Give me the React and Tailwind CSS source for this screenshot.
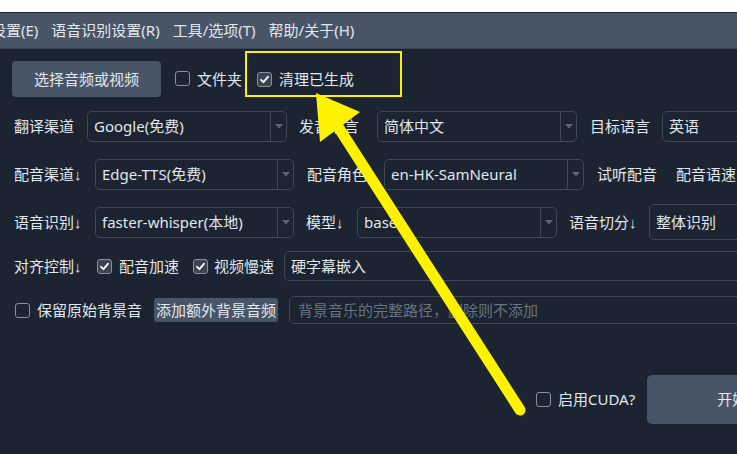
import React from "react";

const font = { fontFamily: '"Noto Sans", "Noto Sans CJK SC", sans-serif' };
const arrowFont = { fontFamily: '"Liberation Sans", "DejaVu Sans", sans-serif' };

function Arr() {
  return <span style={arrowFont}>↓</span>;
}

function Check({ checked }) {
  return (
    <span className={`inline-flex items-center justify-center w-[15px] h-[15px] rounded-[3px] border-[1.5px] border-[#8a9099] shrink-0 ${checked ? "bg-[#3a4452]" : "bg-[#1b2430]"}`}>
      {checked && (
        <svg width="11" height="11" viewBox="0 0 11 11">
          <path d="M2 5.8 L4.4 8.2 L9 2.8" fill="none" stroke="#ffffff" strokeWidth="1.8" strokeLinecap="round" strokeLinejoin="round" />
        </svg>
      )}
    </span>
  );
}

function Combo({ text, w, h = "h-[31px]", arrow = true }) {
  return (
    <div className={`flex ${h} ${w} shrink-0 items-stretch rounded-[5px] border border-[#3d4858]`}>
      <div className="flex-1 flex items-center pl-[6px] whitespace-nowrap overflow-hidden">{text}</div>
      {arrow && (
        <div className="w-[16px] border-l border-[#3d4858] flex items-center justify-center">
          <svg width="8" height="5" viewBox="0 0 8 5"><path d="M0 0 H8 L4 4.5 Z" fill="#5c6674" /></svg>
        </div>
      )}
    </div>
  );
}

export default function App() {
  return (
    <div className="relative w-[737px] h-[454px] overflow-hidden bg-[#1b2430] text-[15px] text-[#e1e7ee] leading-none" style={font}>
      <div className="h-[12px] bg-white"></div>
      <div className="h-[1px] bg-[#1f2630]"></div>
      <div className="h-[36px] bg-[#485567] border-b border-[#3a4556] flex items-center whitespace-nowrap">
        <span className="-ml-[9px]">设置(E)</span>
        <span className="ml-[13px]">语音识别设置(R)</span>
        <span className="ml-[13px]">工具/选项(T)</span>
        <span className="ml-[13px]">帮助/关于(H)</span>
      </div>

      <div className="flex items-center mt-[12px] h-[36px] pl-[12px] whitespace-nowrap">
        <div className="w-[149px] h-[36px] rounded-[4px] bg-[#485567] flex items-center justify-center">选择音频或视频</div>
        <div className="ml-[14px]"><Check /></div>
        <span className="ml-[7px]">文件夹</span>
        <div className="ml-[15px]"><Check checked /></div>
        <span className="ml-[7px]">清理已生成</span>
      </div>

      <div className="flex items-center mt-[14px] h-[31px] pl-[14px] whitespace-nowrap">
        <span className="w-[73px] shrink-0">翻译渠道</span>
        <Combo text="Google(免费)" w="w-[200px]" />
        <span className="w-[90px] shrink-0 pl-[12px]">发音语言</span>
        <Combo text="简体中文" w="w-[200px]" />
        <span className="w-[85px] shrink-0 pl-[13px]">目标语言</span>
        <Combo text="英语" w="w-[200px]" />
      </div>

      <div className="flex items-center mt-[17px] h-[31px] pl-[14px] whitespace-nowrap">
        <span className="w-[81px] shrink-0">配音渠道<Arr /></span>
        <Combo text="Edge-TTS(免费)" w="w-[199px]" />
        <span className="w-[90px] shrink-0 pl-[13px]">配音角色</span>
        <Combo text="en-HK-SamNeural" w="w-[200px]" />
        <span className="shrink-0 ml-[13px]">试听配音</span>
        <span className="shrink-0 ml-[19px]">配音语速</span>
      </div>

      <div className="flex items-center mt-[14px] h-[36px] pl-[14px] whitespace-nowrap">
        <span className="w-[81px] shrink-0">语音识别<Arr /></span>
        <Combo text="faster-whisper(本地)" w="w-[199px]" />
        <span className="w-[63px] shrink-0 pl-[12px]">模型<Arr /></span>
        <Combo text="base" w="w-[200px]" />
        <span className="w-[92px] shrink-0 pl-[12px]">语音切分<Arr /></span>
        <Combo text="整体识别" w="w-[200px]" h="h-[36px]" arrow={false} />
      </div>

      <div className="flex items-center mt-[11px] h-[30px] pl-[14px] whitespace-nowrap">
        <span className="w-[83px] shrink-0">对齐控制<Arr /></span>
        <Check checked />
        <span className="ml-[7px]">配音加速</span>
        <div className="ml-[14px]"><Check checked /></div>
        <span className="ml-[6px]">视频慢速</span>
        <div className="ml-[10px] h-[30px] w-[500px] shrink-0 rounded-[5px] border border-[#3d4858] flex items-center pl-[6px]">硬字幕嵌入</div>
      </div>

      <div className="flex items-center mt-[15px] h-[28px] pl-[15px] whitespace-nowrap">
        <Check />
        <span className="ml-[7px]">保留原始背景音</span>
        <div className="ml-[12px] h-[24px] w-[124px] shrink-0 rounded-[3px] bg-[#485567] flex items-center justify-center">添加额外背景音频</div>
        <div className="ml-[11px] h-[28px] w-[500px] shrink-0 rounded-[5px] border border-[#3d4858] flex items-center pl-[8px] text-[#69737f]">背景音乐的完整路径，删除则不添加</div>
      </div>

      <div className="flex items-center mt-[51px] h-[49px] pl-[536px] whitespace-nowrap">
        <Check />
        <span className="ml-[7px]">启用CUDA?</span>
        <div className="ml-[12px] h-[49px] w-[200px] shrink-0 rounded-[5px] bg-[#485567] flex items-center pl-[70px]">开始执行</div>
      </div>

      <div className="absolute left-[245px] top-[51px] w-[157px] h-[46px] border-2 border-[#fff200]"></div>

      <svg className="absolute left-0 top-0 pointer-events-none" width="737" height="454" viewBox="0 0 737 454">
        <line x1="520" y1="410" x2="335" y2="122" stroke="#fff200" strokeWidth="11" strokeLinecap="round" />
        <polygon points="316,93 320,142 360,112" fill="#fff200" />
      </svg>
    </div>
  );
}
